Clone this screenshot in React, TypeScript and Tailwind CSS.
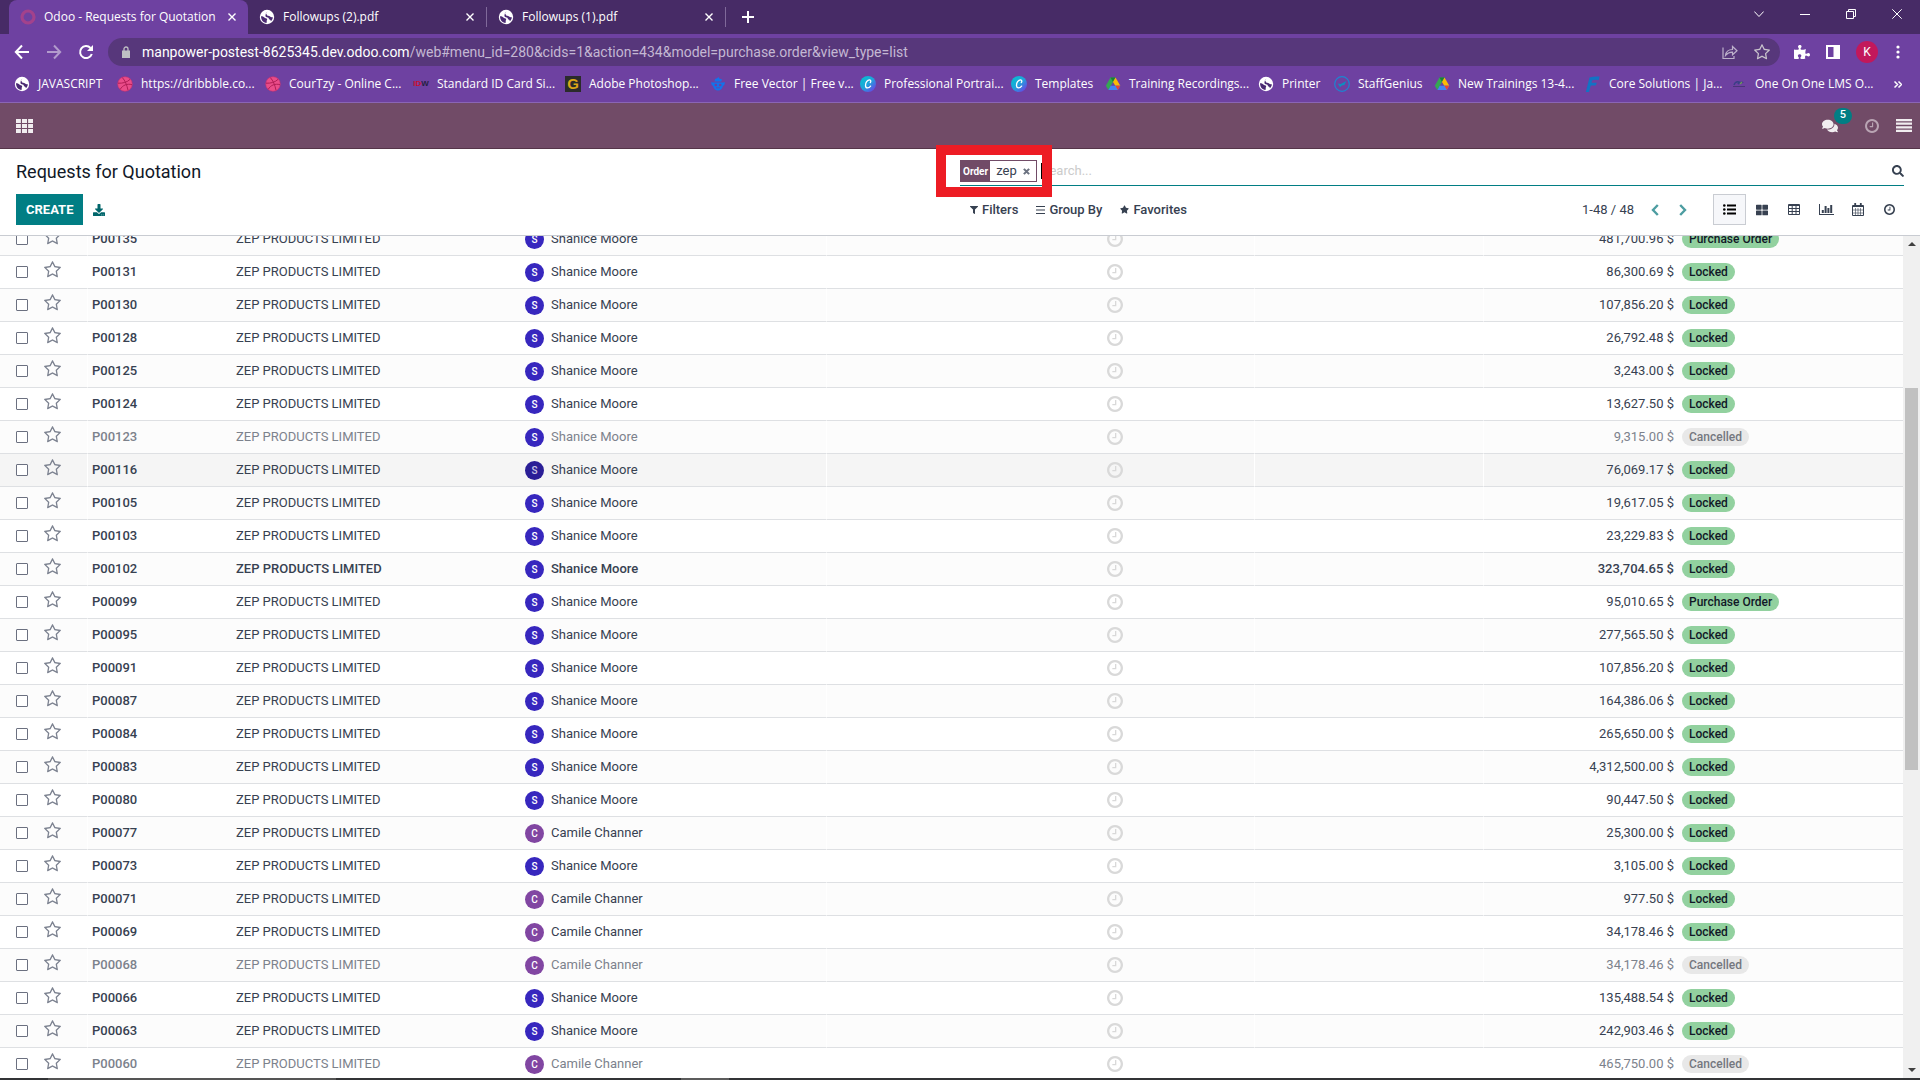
import type { ReactNode } from "react";
import {
  FaDownload,
  FaFilter,
  FaStar,
  FaThLarge,
  FaComments,
  FaSearch,
  FaPuzzlePiece,
} from "react-icons/fa";

type IconProps = { className?: string };

function ClockIcon({ className }: IconProps) {
  return (
    <svg viewBox="0 0 1536 1536" fill="currentColor" className={className} aria-hidden="true">
      <path d="M896 416v448q0 14-9 23t-23 9h-320q-14 0-23-9t-9-23v-64q0-14 9-23t23-9h224v-352q0-14 9-23t23-9h64q14 0 23 9t9 23zm416 352q0-148-73-273t-198-198-273-73-273 73-198 198-73 273 73 273 198 198 273 73 273-73 198-198 73-273zm224 0q0 209-103 385.5t-279.5 279.5-385.5 103-385.5-103-279.5-279.5-103-385.5 103-385.5 279.5-279.5 385.5-103 385.5 103 279.5 279.5 103 385.5z" />
    </svg>
  );
}

function StarOutline({ className }: IconProps) {
  return (
    <svg viewBox="0 60 1664 1600" fill="currentColor" className={className} aria-hidden="true">
      <path d="M1137 1004l306-297-422-62-189-382-189 382-422 62 306 297-73 421 378-199 377 199zm527-357q0 22-26 48l-363 354 86 500q1 7 1 20 0 50-41 50-19 0-40-12l-449-236-449 236q-22 12-40 12-21 0-31.5-14.5t-10.5-35.5q0-6 2-20l86-500-364-354q-25-27-25-48 0-37 56-46l502-73 225-455q19-41 49-41t49 41l225 455 502 73q56 9 56 46z" />
    </svg>
  );
}

function Globe({ className = "size-4" }: IconProps) {
  return (
    <svg viewBox="0 0 16 16" className={className} aria-hidden="true">
      <circle cx="8" cy="8" r="7.2" fill="#fff" />
      <path
        d="M2 7.2c1.6 0 2.6.3 3.4 1.2.8 1 2 .7 2.6 1.4.6.8-.4 1.4-.3 2.3 0 .8.2 1.4-.3 1.8C4.300 13.600 2 11 2 7.200zM8.600 2.200c-.3 1.200-1.900 1.200-1.800 2.300 0 .8 1.300.8 1.300 1.600 0 .7 1 .9 1.900.9 1.300 0 1.500 1.300 2.700 1.300.6 0 1 .2 1.200.2-.2 1.500-1 2.800-2 3.700-.3-.9-.5-1.500-1.300-1.700-1-.3-.6-1.300-1.200-1.800C8.700 8 7 8.400 6.500 7.200 6.100 6.200 7 6 6.600 5.200"
        fill="#4a2a73"
      />
    </svg>
  );
}

function Dribbble() {
  return (
    <svg viewBox="0 0 16 16" className="size-4" fill="none" stroke="#b01d55" aria-hidden="true">
      <circle cx="8" cy="8" r="7.300" fill="#ea4c89" stroke="#c9306d" strokeWidth=".6" />
      <path d="M5.300 1.500C8 4.500 10 9 11 14.300M1 7.200c4.800.2 9-.8 12-3.800M3.200 13.400C5.500 9.200 10 7.300 15 8.700" />
    </svg>
  );
}

function IdwMark() {
  return (
    <span className="flex size-4 items-center justify-center font-['Liberation_Sans'] text-[8px] font-bold" aria-hidden="true">
      <span className="text-[#c8102e]">ID</span>
      <span className="text-[#262043]">W</span>
    </span>
  );
}

function GMark() {
  return (
    <span
      className="flex size-4 items-center justify-center bg-[#2b2b2b] font-['Liberation_Sans'] text-[15px] leading-4 font-bold text-[#dba617]"
      aria-hidden="true"
    >
      G
    </span>
  );
}

function RobotMark() {
  return (
    <svg viewBox="0 0 16 16" className="size-4" aria-hidden="true">
      <path d="M5 3l2-.7L8.500 1l.8 1.600L12 3.400l-.7 2H4.600zM1 6.200l2.500.4h9l2.500-.4-.8 3-1.200.6c-.5 3-2.500 4.700-5 4.700s-4.500-1.700-5-4.700l-1.200-.6z" fill="#1273eb" />
      <circle cx="5.800" cy="9" r="1.300" fill="#6f3fa0" />
      <circle cx="10.200" cy="9" r="1.300" fill="#6f3fa0" />
      <path d="M6 11.800h4" stroke="#6f3fa0" strokeWidth=".8" />
    </svg>
  );
}

function CanvaMark() {
  return (
    <svg viewBox="0 0 16 16" className="size-4" aria-hidden="true">
      <defs>
        <linearGradient id="canva" x1="0" y1="0" x2="1" y2="1">
          <stop offset="0" stopColor="#00c4cc" />
          <stop offset=".5" stopColor="#1fa3dc" />
          <stop offset="1" stopColor="#7d2ae8" />
        </linearGradient>
      </defs>
      <circle cx="8" cy="8" r="8" fill="url(#canva)" />
      <path d="M10.300 6.500c.8-.7.700-2.700-.7-2.700C7.300 3.800 5.300 7 5.500 9.600c.2 3.100 3.300 2.900 5.100.5" fill="none" stroke="#fff" strokeWidth="1.300" strokeLinecap="round" />
    </svg>
  );
}

function DriveMark() {
  return (
    <svg viewBox="0 0 16 16" className="size-4" aria-hidden="true">
      <path d="M5.500 1.500h5L8 6 3.400 14 .8 9.800z" fill="#34a853" />
      <path d="M5.500 1.500h5l-2.500 4.500z" fill="#188038" />
      <path d="M10.500 1.500L15.300 9.800h-5L8 6z" fill="#fbbc04" />
      <path d="M5.700 9.800h9.600L12.800 14H3.400z" fill="#4285f4" />
      <path d="M10.400 9.800h4.900L12.800 14z" fill="#ea4335" />
    </svg>
  );
}

function StaffMark() {
  return (
    <svg viewBox="0 0 16 16" className="size-4" fill="none" aria-hidden="true">
      <circle cx="8" cy="8" r="7.300" stroke="#1c86d1" strokeWidth="1.200" />
      <path d="M3.800 7.400l3 .6 5.600-3-2 4-2.600.4-1.800 1.800z" fill="#0d8fc0" />
    </svg>
  );
}

function CoreMark() {
  return (
    <svg viewBox="0 0 16 16" className="size-4" aria-hidden="true">
      <path d="M4.500 1.500Q9 0 14.500.5L13.800 4Q9.500 3.300 7 4.600L6.500 6.700h5.300l-1 2.800H5.800L4 16H.8z" fill="#1273c4" />
    </svg>
  );
}

function LmsMark() {
  return (
    <svg viewBox="0 0 16 16" className="size-4" fill="none" aria-hidden="true">
      <path d="M3 9q1-4 5-3l-1 2q4-3 5-1" stroke="#3a3f86" strokeWidth="1.400" />
      <path d="M9 8l2-2" stroke="#6f9a58" strokeWidth="1.200" />
      <path d="M2 10.500h12" stroke="#4a3478" />
    </svg>
  );
}

function CloseGlyph({ className = "size-2" }: IconProps) {
  return (
    <svg viewBox="0 0 8 8" className={className} stroke="currentColor" strokeWidth="1.400" aria-hidden="true">
      <path d="M.5.5l7 7M7.500.5l-7 7" />
    </svg>
  );
}

const tabs = [
  { title: "Odoo - Requests for Quotation", active: true },
  { title: "Followups (2).pdf", active: false },
  { title: "Followups (1).pdf", active: false },
];

const bookmarks: { label: string; icon: ReactNode; width: string }[] = [
  { label: "JAVASCRIPT", icon: <Globe />, width: "w-[103px]" },
  { label: "https://dribbble.co...", icon: <Dribbble />, width: "w-[148px]" },
  { label: "CourTzy - Online C...", icon: <Dribbble />, width: "w-[148px]" },
  { label: "Standard ID Card Si...", icon: <IdwMark />, width: "w-[152px]" },
  { label: "Adobe Photoshop...", icon: <GMark />, width: "w-[145px]" },
  { label: "Free Vector | Free v...", icon: <RobotMark />, width: "w-[150px]" },
  { label: "Professional Portrai...", icon: <CanvaMark />, width: "w-[151px]" },
  { label: "Templates", icon: <CanvaMark />, width: "w-[94px]" },
  { label: "Training Recordings...", icon: <DriveMark />, width: "w-[153px]" },
  { label: "Printer", icon: <Globe />, width: "w-[76px]" },
  { label: "StaffGenius", icon: <StaffMark />, width: "w-[100px]" },
  { label: "New Trainings 13-4...", icon: <DriveMark />, width: "w-[151px]" },
  { label: "Core Solutions | Ja...", icon: <CoreMark />, width: "w-[146px]" },
  { label: "One On One LMS O...", icon: <LmsMark />, width: "w-[146px]" },
];

type Status = "Locked" | "Cancelled" | "Purchase Order";
type Order = { ref: string; buyer: "Shanice Moore" | "Camile Channer"; total: string; status: Status; hovered?: boolean; bold?: boolean };

const S = "Shanice Moore";
const C = "Camile Channer";

const orders: Order[] = [
  { ref: "P00135", buyer: S, total: "481,700.96", status: "Purchase Order" },
  { ref: "P00131", buyer: S, total: "86,300.69", status: "Locked" },
  { ref: "P00130", buyer: S, total: "107,856.20", status: "Locked" },
  { ref: "P00128", buyer: S, total: "26,792.48", status: "Locked" },
  { ref: "P00125", buyer: S, total: "3,243.00", status: "Locked" },
  { ref: "P00124", buyer: S, total: "13,627.50", status: "Locked" },
  { ref: "P00123", buyer: S, total: "9,315.00", status: "Cancelled" },
  { ref: "P00116", buyer: S, total: "76,069.17", status: "Locked", hovered: true },
  { ref: "P00105", buyer: S, total: "19,617.05", status: "Locked" },
  { ref: "P00103", buyer: S, total: "23,229.83", status: "Locked" },
  { ref: "P00102", buyer: S, total: "323,704.65", status: "Locked", bold: true },
  { ref: "P00099", buyer: S, total: "95,010.65", status: "Purchase Order" },
  { ref: "P00095", buyer: S, total: "277,565.50", status: "Locked" },
  { ref: "P00091", buyer: S, total: "107,856.20", status: "Locked" },
  { ref: "P00087", buyer: S, total: "164,386.06", status: "Locked" },
  { ref: "P00084", buyer: S, total: "265,650.00", status: "Locked" },
  { ref: "P00083", buyer: S, total: "4,312,500.00", status: "Locked" },
  { ref: "P00080", buyer: S, total: "90,447.50", status: "Locked" },
  { ref: "P00077", buyer: C, total: "25,300.00", status: "Locked" },
  { ref: "P00073", buyer: S, total: "3,105.00", status: "Locked" },
  { ref: "P00071", buyer: C, total: "977.50", status: "Locked" },
  { ref: "P00069", buyer: C, total: "34,178.46", status: "Locked" },
  { ref: "P00068", buyer: C, total: "34,178.46", status: "Cancelled" },
  { ref: "P00066", buyer: S, total: "135,488.54", status: "Locked" },
  { ref: "P00063", buyer: S, total: "242,903.46", status: "Locked" },
  { ref: "P00060", buyer: C, total: "465,750.00", status: "Cancelled" },
];

function TabStrip() {
  return (
    <div className="flex h-[34px] bg-[#472b66] pl-[9px]">
      {tabs.map((tab) => (
        <div
          key={tab.title}
          className={`flex w-[239px] items-center gap-2 pr-3 pl-[11px] ${tab.active ? "rounded-t-lg bg-[#6e41a1]" : ""}`}
        >
          {tab.active ? (
            <svg viewBox="0 0 16 16" className="size-4" aria-hidden="true">
              <circle cx="8" cy="8" r="6" fill="none" stroke="#a3428c" strokeWidth="3.200" />
            </svg>
          ) : (
            <Globe />
          )}
          <span className="flex-1 truncate">{tab.title}</span>
          <button type="button" aria-label={`Close ${tab.title}`}>
            <CloseGlyph />
          </button>
          {!tab.active && <span className="-mr-3 ml-1 h-5 w-px bg-[#80699a]" />}
        </div>
      ))}
      <button type="button" aria-label="New tab" className="ml-4 flex items-center">
        <svg viewBox="0 0 12 12" className="size-3" stroke="#fff" strokeWidth="2" aria-hidden="true">
          <path d="M6 0v12M0 6h12" />
        </svg>
      </button>
      <div className="ml-auto flex h-7 items-center">
        <button type="button" aria-label="Search tabs" className="flex w-[46px] justify-center">
          <svg viewBox="0 0 10 6" className="h-1.5 w-2.5" fill="none" stroke="#fff" aria-hidden="true">
            <path d="M.3.500L5 5.500 9.700.5" />
          </svg>
        </button>
        <button type="button" aria-label="Minimize" className="flex w-[46px] justify-center">
          <span className="h-px w-2.5 bg-white" />
        </button>
        <button type="button" aria-label="Restore" className="flex w-[46px] justify-center">
          <svg viewBox="0 0 10 10" className="size-2.5" fill="none" stroke="#fff" aria-hidden="true">
            <path d="M.5 2.500h7v7h-7zM2.500 2.500v-2h7v7h-2" />
          </svg>
        </button>
        <button type="button" aria-label="Close window" className="flex w-[46px] justify-center">
          <svg viewBox="0 0 10 10" className="size-2.5" stroke="#fff" aria-hidden="true">
            <path d="M.3.300l9.400 9.400M9.700.300L.300 9.700" />
          </svg>
        </button>
      </div>
    </div>
  );
}

function Toolbar() {
  return (
    <div className="flex h-9 items-center bg-[#6e41a1] pr-5 pl-[14px]">
      <div className="flex w-[94px] gap-4">
        <button type="button" aria-label="Back">
          <svg viewBox="0 0 16 16" className="size-4" fill="none" stroke="#fff" strokeWidth="2" aria-hidden="true">
            <path d="M15 8H2.500M8 1.500L1.800 8 8 14.500" />
          </svg>
        </button>
        <button type="button" aria-label="Forward">
          <svg viewBox="0 0 16 16" className="size-4" fill="none" stroke="#b29bcc" strokeWidth="2" aria-hidden="true">
            <path d="M1 8h12.500M8 1.500L14.200 8 8 14.500" />
          </svg>
        </button>
        <button type="button" aria-label="Reload">
          <svg viewBox="0 0 16 16" className="size-4" fill="none" stroke="#fff" strokeWidth="2" aria-hidden="true">
            <path d="M13.800 10A6 6 0 1 1 12.500 4" />
            <path d="M15 1v6H9z" fill="#fff" stroke="none" />
          </svg>
        </button>
      </div>
      <div className="flex h-7 flex-1 items-center rounded-full bg-[#57377b] pr-2.5 pl-[14px]">
        <svg viewBox="0 0 8 12" className="h-3 w-2" aria-hidden="true">
          <path d="M2 5V3a2 2 0 0 1 4 0v2" fill="none" stroke="#bfc0c4" strokeWidth="1.300" />
          <path d="M0 4.500h8V12H0z" fill="#bfc0c4" />
        </svg>
        <p className="ml-3 flex-1 truncate font-[Roboto] text-sm text-[#c4b8d3]">
          <span className="text-white">manpower-postest-8625345.dev.odoo.com</span>
          /web#menu_id=280&amp;cids=1&amp;action=434&amp;model=purchase.order&amp;view_type=list
        </p>
        <button type="button" aria-label="Share" className="mr-4">
          <svg viewBox="0 0 16 16" className="size-4" fill="none" stroke="#bdb1cb" strokeWidth="1.200" aria-hidden="true">
            <path d="M1 3.500v11h11v-2.500M3.500 11.500c.5-4 3-6 7-6V2.500l4.500 4.300-4.500 4V8.200c-3-.1-5 .8-7 3.300z" />
          </svg>
        </button>
        <button type="button" aria-label="Bookmark this page">
          <StarOutline className="size-4 text-[#c9c4cc]" />
        </button>
      </div>
      <div className="ml-[14px] flex items-center gap-4">
        <FaPuzzlePiece className="size-4" />
        <svg viewBox="0 0 14 14" className="size-[14px]" aria-hidden="true">
          <path d="M0 0h14v14H0zM2 2v10h5.500V2z" fill="#fff" fillRule="evenodd" />
        </svg>
        <span className="flex size-[22px] items-center justify-center rounded-full bg-[#c2185b] font-[Roboto]">K</span>
        <svg viewBox="0 0 4 14" className="ml-0.5 h-[14px] w-1" fill="#fff" aria-hidden="true">
          <circle cx="2" cy="2" r="1.600" />
          <circle cx="2" cy="7" r="1.600" />
          <circle cx="2" cy="12" r="1.600" />
        </svg>
      </div>
    </div>
  );
}

function BookmarksBar() {
  return (
    <nav aria-label="Bookmarks" className="flex h-[33px] items-center border-b border-[#8a65b5] bg-[#6e41a1] pr-[18px] pb-1 pl-[14px]">
      {bookmarks.map((b) => (
        <a key={b.label} href="#" className={`flex shrink-0 items-center gap-2 whitespace-nowrap ${b.width}`}>
          <span className="shrink-0">{b.icon}</span>
          {b.label}
        </a>
      ))}
      <svg viewBox="0 0 8 7" className="ml-auto h-[7px] w-2" fill="none" stroke="#fff" strokeWidth="1.500" aria-hidden="true">
        <path d="M.5.500l3 3-3 3M4.500.500l3 3-3 3" />
      </svg>
    </nav>
  );
}

function AppNav() {
  return (
    <header className="flex h-[46px] items-center border-b border-[#553549] bg-[#714b67] px-4">
      <button type="button" aria-label="Home menu">
        <svg viewBox="0 0 15 14" className="h-[14px] w-[17px]" preserveAspectRatio="none" fill="#f1edf0" aria-hidden="true">
          <path d="M0 0h4.300v4H0zM5.300 0h4.400v4H5.300zM10.700 0H15v4h-4.300zM0 5h4.300v4H0zM5.300 5h4.400v4H5.300zM10.700 5H15v4h-4.300zM0 10h4.300v4H0zM5.300 10h4.400v4H5.300zM10.700 10H15v4h-4.300z" />
        </svg>
      </button>
      <div className="-mr-2 ml-auto flex items-center">
        <button type="button" aria-label="Messages, 5 unread" className="relative mr-[27px]">
          <FaComments className="h-4 w-4 text-[#f1edf0]" />
          <span className="absolute -top-2.5 left-3 flex h-4 w-[18px] items-center justify-center rounded-full bg-[#017e84] font-[Roboto] text-[11px] font-medium">5</span>
        </button>
        <button type="button" aria-label="Activities" className="mr-[17px]">
          <ClockIcon className="size-[14px] text-[#b9a4b3]" />
        </button>
        <button type="button" aria-label="Menu">
          <svg viewBox="0 0 16 13" className="h-[13px] w-4" fill="#f1edf0" aria-hidden="true">
            <path d="M0 0h16v2.200H0zM0 3.600h16v2.200H0zM0 7.200h16v2.200H0zM0 10.800h16V13H0z" />
          </svg>
        </button>
      </div>
    </header>
  );
}

const viewButtons: { label: string; icon: ReactNode }[] = [
  { label: "Kanban", icon: <FaThLarge className="size-3" /> },
  {
    label: "Pivot",
    icon: (
      <svg viewBox="0 0 12 11" className="h-[11px] w-3" fill="none" stroke="currentColor" aria-hidden="true">
        <path d="M.5.500h11v10H.5zM0 1.500h12M0 4.500h12M0 7.500h12M4.200 1v10M8 1v10" />
      </svg>
    ),
  },
  {
    label: "Graph",
    icon: (
      <svg viewBox="0 0 15 11" className="h-[11px] w-[15px]" fill="currentColor" aria-hidden="true">
        <path d="M0 0h1v10h14v1H0zM2.800 6h2v3h-2zM5.600 2h2v7h-2zM8.400 4h2v5h-2zM11.200 1h2v8h-2z" />
      </svg>
    ),
  },
  {
    label: "Calendar",
    icon: (
      <svg viewBox="0 0 12 13" className="h-[13px] w-3" fill="none" stroke="currentColor" aria-hidden="true">
        <path d="M.5 2.500h11v10H.5zM0 3.500h12" />
        <path d="M3.200 0v3.500M8.800 0v3.500" strokeWidth="1.800" />
        <path d="M1 7h10M1 10h10M3.500 5v7M6 5v7M8.500 5v7" strokeWidth=".6" />
      </svg>
    ),
  },
  { label: "Activity", icon: <ClockIcon className="size-[11px]" /> },
];

function ControlPanel() {
  return (
    <section className="grid grid-cols-2 border-b border-[#c9ccd2] bg-white text-[#374151]">
      <div className="flex flex-col gap-2 pt-[9px] pb-2.5 pl-4">
        <h1 className="text-lg leading-7 text-[#111827]">Requests for Quotation</h1>
        <div className="flex items-center">
          <button type="button" className="h-[31px] bg-[#017e84] px-2.5 font-bold text-white">
            CREATE
          </button>
          <button type="button" aria-label="Export all" className="ml-2.5 text-[#01666b]">
            <FaDownload className="size-3" />
          </button>
        </div>
      </div>
      <div className="flex flex-col pr-4">
        <div className="relative flex h-[37px] items-center border-b border-[#017e84] pt-2">
          <div className="flex h-[22px] items-center border border-[#714b67]">
            <span className="flex h-full items-center bg-[#714b67] px-0.5 text-[10px] font-bold text-white">Order</span>
            <span className="pl-1.5">zep</span>
            <button type="button" aria-label="Remove filter" className="px-1.5 text-[#6b7280]">
              <svg viewBox="0 0 8 8" className="size-[7px]" stroke="currentColor" strokeWidth="2.400" aria-hidden="true">
                <path d="M1 1l6 6M7 1L1 7" />
              </svg>
            </button>
          </div>
          <span className="ml-1 h-4 w-px bg-black" />
          <input aria-label="Search" placeholder="Search..." className="min-w-0 flex-1 outline-none placeholder:text-[#cbcbcb]" />
          <button type="button" aria-label="Run search">
            <FaSearch className="size-3" />
          </button>
          <div className="pointer-events-none absolute -top-1 -left-6 h-[52px] w-[116px] border-10 border-[#ed1c24]" />
        </div>
        <div className="flex flex-1 items-center pb-0.5 font-medium">
          <button type="button" className="ml-2.5 flex items-center gap-1">
            <FaFilter className="size-2" />
            Filters
          </button>
          <button type="button" className="ml-[18px] flex items-center gap-1">
            <svg viewBox="0 0 9 8" className="h-2 w-[9px]" fill="currentColor" aria-hidden="true">
              <path d="M0 0h9v1H0zM0 3.500h9v1H0zM0 7h9v1H0z" />
            </svg>
            Group By
          </button>
          <button type="button" className="ml-[18px] flex items-center gap-1">
            <FaStar className="size-[9px]" />
            Favorites
          </button>
          <span className="ml-auto font-normal">1-48 / 48</span>
          <button type="button" aria-label="Previous" className="ml-[17px] text-[#4d9da1]">
            <svg viewBox="0 0 8 12" className="h-3 w-2" fill="none" stroke="currentColor" strokeWidth="2.400" aria-hidden="true">
              <path d="M6.800 1L2 6l4.800 5" />
            </svg>
          </button>
          <button type="button" aria-label="Next" className="ml-5 text-[#4d9da1]">
            <svg viewBox="0 0 8 12" className="h-3 w-2" fill="none" stroke="currentColor" strokeWidth="2.400" aria-hidden="true">
              <path d="M1.200 1L6 6l-4.800 5" />
            </svg>
          </button>
          <button
            type="button"
            aria-label="List"
            className="ml-[26px] flex h-[31px] w-[33px] items-center justify-center border border-[#c9ccd2] bg-[#f6f7fa] text-black"
          >
            <svg viewBox="0 0 13 11" className="h-[11px] w-[13px]" fill="currentColor" aria-hidden="true">
              <circle cx="1.300" cy="1.500" r="1.300" />
              <circle cx="1.300" cy="5.500" r="1.300" />
              <circle cx="1.300" cy="9.500" r="1.300" />
              <path d="M4 .6h9v1.800H4zM4 4.600h9v1.800H4zM4 8.600h9v1.800H4z" />
            </svg>
          </button>
          {viewButtons.map((v) => (
            <button key={v.label} type="button" aria-label={v.label} className="flex h-[31px] w-8 items-center justify-center last:w-[30px]">
              {v.icon}
            </button>
          ))}
        </div>
      </div>
    </section>
  );
}

function OrderRow({ order, striped }: { order: Order; striped: boolean }) {
  const cancelled = order.status === "Cancelled";
  const bg = order.hovered ? "bg-[#f5f5f5]" : striped ? "bg-[#fcfcfc]" : "bg-white";
  const tone = cancelled ? "text-[#7c828c]" : "text-[#374151]";
  const cell = "border-b border-[#dee0e3] p-0";
  const split = `${cell} border-r border-r-white`;
  return (
    <tr className={`h-[33px] ${bg} ${tone} ${order.bold ? "font-medium" : ""}`}>
      <td className={`${cell} pl-4`}>
        <input
          type="checkbox"
          aria-label={`Select ${order.ref}`}
          className="block size-3 appearance-none rounded-[1px] border border-[#6b7080] bg-white"
        />
      </td>
      <td className={split}>
        <button type="button" aria-label={`Mark ${order.ref} as priority`} className="ml-1 block pb-1.5 text-[#7c8290]">
          <StarOutline className="size-[17px]" />
        </button>
      </td>
      <td className={`${cell} pl-1 font-medium`}>{order.ref}</td>
      <td className={`${cell} pl-[7px]`}>ZEP PRODUCTS LIMITED</td>
      <td className={`${split} pl-[7px]`}>
        <div className="flex items-center gap-[7px]">
          <span
            className={`flex size-[19px] items-center justify-center rounded-full text-[10px] font-medium ${
              order.buyer === C
                ? "bg-[#8146a2] text-white"
                : order.hovered
                  ? "bg-[#2a1e96] text-[#c9c6e4]"
                  : "bg-[#3727be] text-white"
            }`}
          >
            {order.buyer[0]}
          </span>
          {order.buyer}
        </div>
      </td>
      <td className={split}>
        <button type="button" aria-label={`Activities for ${order.ref}`} className="ml-[280px] block text-[#d9d9d9]">
          <ClockIcon className="size-4" />
        </button>
      </td>
      <td className={split} />
      <td className={`${cell} pr-1 text-right`}>{order.total} $</td>
      <td className={`${cell} pl-1`}>
        <span
          className={`block w-fit rounded-full px-[7px] text-xs leading-[18px] font-medium ${
            cancelled ? "bg-[#e8e8e8] text-[#74777f]" : "bg-[#92d19f] text-[#111827]"
          }`}
        >
          {order.status}
        </span>
      </td>
    </tr>
  );
}

function OrderList() {
  return (
    <main className="flex min-h-0 flex-1 bg-white">
      <div className="min-w-0 flex-1 overflow-hidden">
        <table aria-label="Requests for Quotation" className="-mt-[13px] w-full table-fixed border-separate border-spacing-0">
          <colgroup>
            <col className="w-10" />
            <col className="w-12" />
            <col className="w-[141px]" />
            <col className="w-[289px]" />
            <col className="w-[309px]" />
            <col className="w-[428px]" />
            <col className="w-[229px]" />
            <col className="w-[194px]" />
            <col className="w-[225px]" />
          </colgroup>
          <tbody>
            {orders.map((o, i) => (
              <OrderRow key={o.ref} order={o} striped={i % 2 === 0} />
            ))}
          </tbody>
        </table>
      </div>
      <div className="flex w-[17px] flex-col items-center bg-[#f0f0f0] py-1.5" aria-hidden="true">
        <svg viewBox="0 0 8 4" className="h-1 w-2" fill="#404040">
          <path d="M4 0l4 4H0z" />
        </svg>
        <div className="flex w-full flex-1 flex-col pt-[142px] pl-0.5">
          <div className="h-[382px] w-[13px] bg-[#c1c1c1]" />
        </div>
        <svg viewBox="0 0 8 4" className="h-1 w-2" fill="#404040">
          <path d="M0 0h8L4 4z" />
        </svg>
      </div>
    </main>
  );
}

export default function App() {
  return (
    <div className="flex h-screen flex-col overflow-hidden font-[Roboto,sans-serif] text-[13px]">
      <div className="font-['Open_Sans',sans-serif] text-xs text-white">
        <TabStrip />
        <Toolbar />
        <BookmarksBar />
        <AppNav />
      </div>
      <ControlPanel />
      <OrderList />
      <div className="flex h-0.5 bg-[#333436]">
        <span className="ml-12 w-72 bg-[#555555]" />
        <span className="ml-[345px] w-12 bg-[#5c5c5c]" />
      </div>
    </div>
  );
}
